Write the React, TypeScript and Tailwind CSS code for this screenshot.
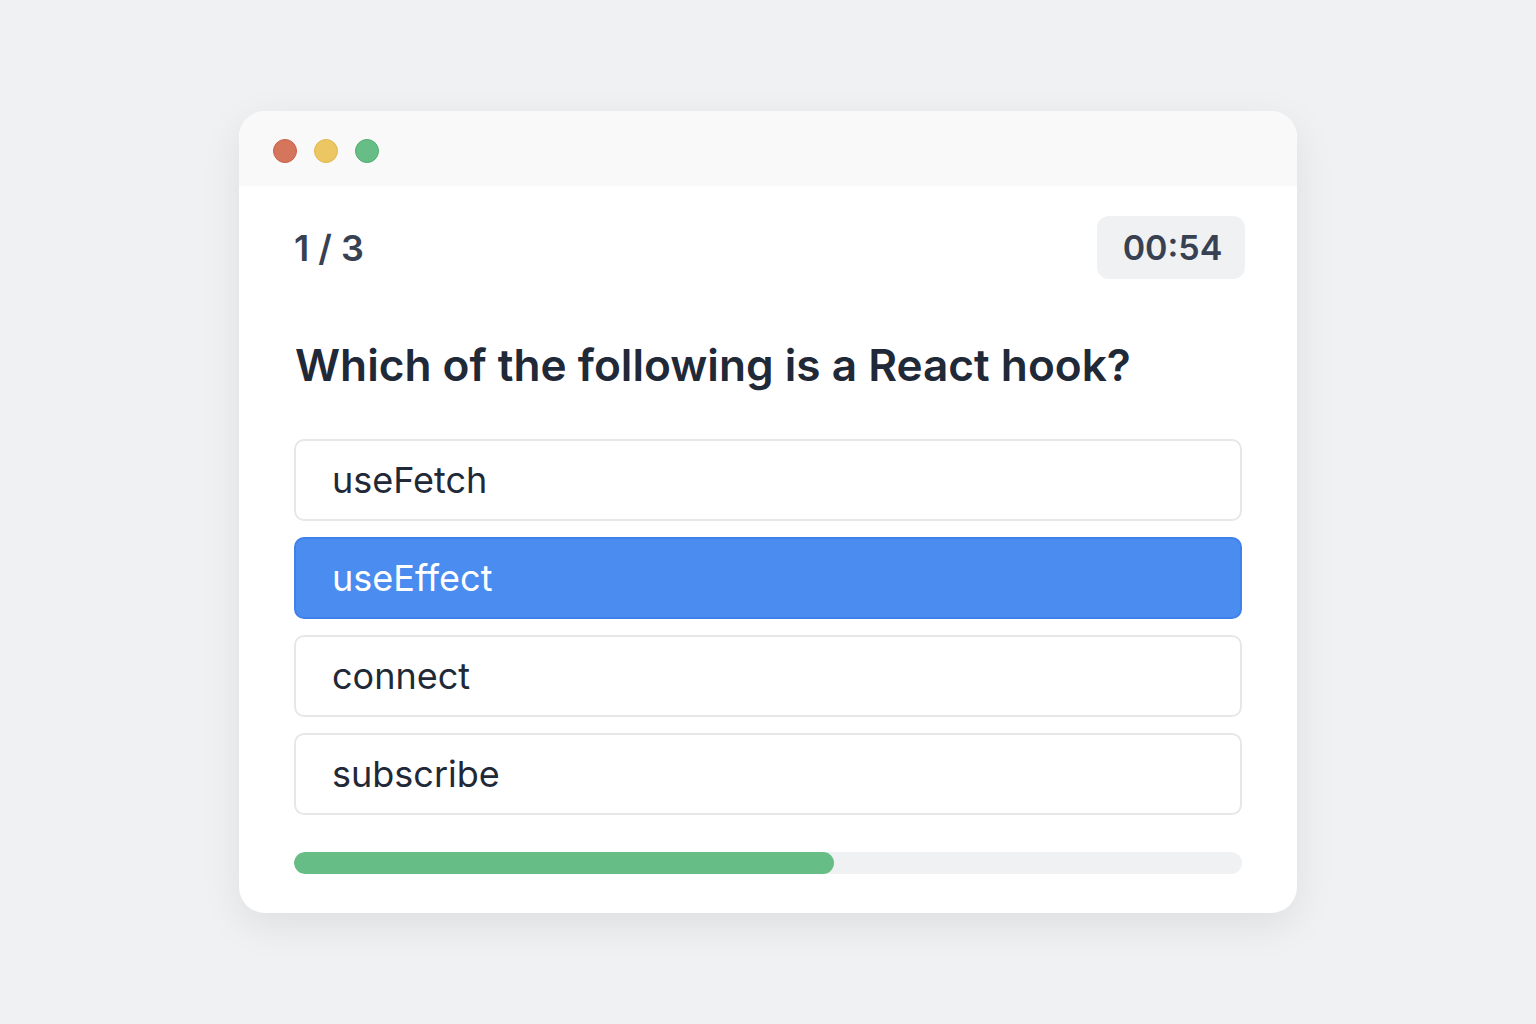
import React from "react";

const options = ["useFetch", "useEffect", "connect", "subscribe"];

export default function App() {
  const selected = 1;
  const progress = 0.57;
  return (
    <div
      className="flex h-screen w-full items-center justify-center bg-[#f0f1f3]"
      style={{ fontFamily: "Inter, 'Noto Sans', sans-serif" }}
    >
      <div className="flex h-[802px] w-[1058px] flex-col overflow-hidden rounded-[26px] bg-white shadow-[0_12px_40px_rgba(0,0,0,0.08)]">
        <div className="flex h-[75px] shrink-0 items-center gap-[17px] bg-[#f9f9f9] pl-[34px] pt-[4px]">
          <span className="h-[24px] w-[24px] rounded-full border border-[#c9604a] bg-[#d4755c]" />
          <span className="h-[24px] w-[24px] rounded-full border border-[#e2b84e] bg-[#ecc662]" />
          <span className="h-[24px] w-[24px] rounded-full border border-[#52ad72] bg-[#66bd85]" />
        </div>
        <div className="flex flex-1 flex-col px-[55px] pb-[40px] pt-[30px]">
          <div className="flex items-center justify-between">
            <div className="text-[36px] font-semibold leading-none text-[#374151]">1 / 3</div>
            <div className="mr-[-3px] flex h-[63px] w-[148px] items-center justify-center rounded-[12px] bg-[#f0f1f3] pl-[3px] text-[34px] font-semibold text-[#374151]">
              00:54
            </div>
          </div>
          <h1 className="mt-[60px] pl-[1px] text-[44.2px] font-semibold leading-[53px] text-[#1f2937]">
            Which of the following is a React hook?
          </h1>
          <div className="mt-[47px] flex flex-col gap-[16px]">
            {options.map((o, i) => (
              <div
                key={o}
                className={
                  i === selected
                    ? "flex h-[82px] items-center rounded-[10px] border-2 border-[#3f80ea] bg-[#4a8cef] pl-[36px] text-[36px] text-white"
                    : "flex h-[82px] items-center rounded-[10px] border-2 border-[#e6e7e9] bg-white pl-[36px] text-[36px] text-[#1f2937]"
                }
              >
                {o}
              </div>
            ))}
          </div>
          <div className="mt-[37px] h-[22px] w-full overflow-hidden rounded-full bg-[#f0f1f2]">
            <div
              className="h-full rounded-full bg-[#66bd85]"
              style={{ width: `${progress * 100}%` }}
            />
          </div>
        </div>
      </div>
    </div>
  );
}
